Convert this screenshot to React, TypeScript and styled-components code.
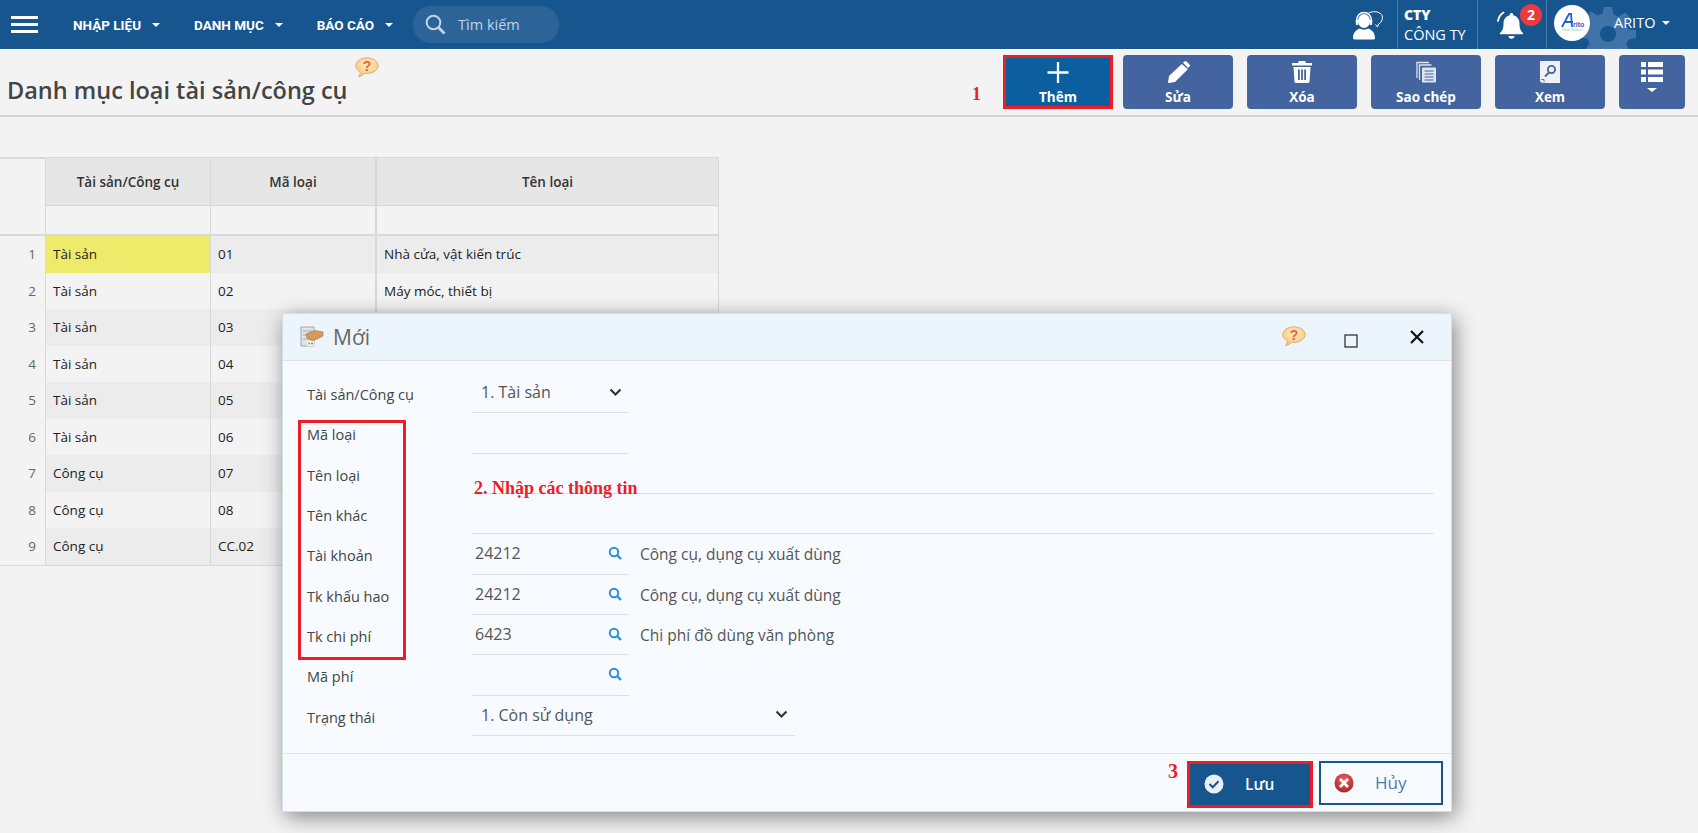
import React from "react";
import styled, { createGlobalStyle } from "styled-components";

const Global = createGlobalStyle`
  html, body { margin: 0; height: 100%; overflow: hidden; background: #f3f3f3; }
  body { font-family: "Open Sans", "Noto Sans", sans-serif; color: #333; }
  * { box-sizing: border-box; }
`;

const Page = styled.div`
  position: relative;
  width: 1698px;
  height: 833px;
  overflow: hidden;
`;

/* ---------- top bar ---------- */
const TopBar = styled.header`
  display: flex;
  align-items: center;
  height: 50px;
  background: #17558f;
  border-bottom: 1px solid #fff;
  color: #fff;
  overflow: hidden;
`;
const Burger = styled.div`
  width: 27px;
  height: 17px;
  margin: 0 0 0 11px;
  display: flex;
  flex-direction: column;
  justify-content: space-between;
  i { display: block; height: 3px; background: #fff; }
`;
const Menu = styled.nav`
  display: flex;
  align-items: center;
  margin-left: 35px;
  gap: 34px;
`;
const MenuItem = styled.span`
  display: flex;
  align-items: center;
  gap: 11px;
  font: 700 13.5px/20px Roboto, sans-serif;
  letter-spacing: 0;
  white-space: nowrap;
`;
const Caret = styled.span`
  display: inline-block;
  width: 0;
  height: 0;
  border-left: 4px solid transparent;
  border-right: 4px solid transparent;
  border-top: 4px solid #fff;
`;
const Search = styled.div`
  width: 146px;
  height: 37px;
  margin-left: 20px;
  margin-bottom: 1px;
  border-radius: 18px;
  background: #2b6498;
  color: #c3d3e3;
  display: flex;
  align-items: center;
  padding-left: 12px;
  gap: 12px;
  font-size: 14.5px;
`;
const RightBar = styled.div`
  margin-left: auto;
  height: 49px;
  display: flex;
  align-items: stretch;
`;
const Cell = styled.div<{ $w: number }>`
  width: ${(p) => p.$w}px;
  display: flex;
  align-items: center;
  border-left: 1px solid #4b7dac;
  position: relative;
`;
const SupportCell = styled.div`
  width: 44px;
  display: flex;
  align-items: center;
`;
const Company = styled(Cell)`
  flex-direction: column;
  align-items: flex-start;
  justify-content: center;
  padding-left: 6px;
`;
const CompanyCode = styled.b`
  font: 800 14px/19px "Open Sans", sans-serif;
`;
const CompanyName = styled.span`
  font-size: 14.5px;
  line-height: 21px;
  white-space: nowrap;
`;
const Badge = styled.span`
  position: absolute;
  left: 42px;
  top: 4px;
  width: 22px;
  height: 22px;
  border-radius: 50%;
  background: #e83a3f;
  color: #fff;
  font: 700 14px/22px "Open Sans", sans-serif;
  text-align: center;
`;
const Gear = styled.div`
  position: absolute;
  left: 33px;
  top: 6px;
  color: #3f72a6;
  line-height: 0;
`;
const Avatar = styled.div`
  position: absolute;
  left: 7px;
  top: 5px;
  width: 36px;
  height: 36px;
  border-radius: 50%;
  background: #fff;
  line-height: 0;
`;
const UserName = styled.span`
  position: absolute;
  left: 67px;
  top: 13px;
  font-size: 14.5px;
  line-height: 20px;
  display: flex;
  align-items: center;
  gap: 7px;
`;

/* ---------- title + toolbar ---------- */
const TitleBar = styled.div`
  display: flex;
  height: 67px;
  border-bottom: 2px solid #d4d4d4;
  padding-right: 13px;
`;
const Title = styled.h1`
  margin: 23px 0 0 7px;
  font: 600 23.5px/34px "Open Sans", sans-serif;
  color: #444;
  white-space: nowrap;
`;
const TitleHelp = styled.span`
  margin: 7px 0 0 7px;
  line-height: 0;
`;
const Toolbar = styled.div`
  margin-left: auto;
  padding-top: 5px;
  display: flex;
  align-items: flex-start;
  gap: 14px;
`;
const Step = styled.span<{ $size: number }>`
  font: 700 ${(p) => p.$size}px/20px "Liberation Serif", serif;
  color: #ee1c25;
`;
const StepOne = styled(Step)`
  margin: 29px 8px 0 0;
`;
const ToolButton = styled.div<{ $w?: number; $active?: boolean }>`
  width: ${(p) => p.$w ?? 110}px;
  height: 54px;
  border-radius: 4px;
  background: ${(p) => (p.$active ? "#0c5f9e" : "#43649e")};
  color: #fff;
  display: flex;
  flex-direction: column;
  align-items: center;
  padding-top: ${(p) => (p.$active ? 4 : 6)}px;
  ${(p) => p.$active && "border: 3px solid #ee1c25; border-radius: 0; margin-right: -4px;"}
  font: 700 13.5px/18px "Open Sans", sans-serif;
  white-space: nowrap;
  svg { display: block; }
`;
const ToolLabel = styled.span`
  margin-top: 5px;
`;

/* ---------- grid ---------- */
const Table = styled.div`
  margin-top: 40px;
  width: 719px;
  display: grid;
  grid-template-columns: 45px 165px 165px 1fr;
  grid-template-rows: 47px 30px repeat(9, 36.5px);
  border-top: 2px solid #d8d8d8;
  border-right: 1px solid #d8d8d8;
  border-bottom: 1px solid #d8d8d8;
  font-size: 13.5px;
  color: #222;
`;
const HeadCell = styled.div<{ $thick?: boolean }>`
  background: #e6e6e6;
  border-left: ${(p) => (p.$thick ? 2 : 1)}px solid #d8d8d8;
  border-bottom: 1px solid #d8d8d8;
  display: flex;
  align-items: center;
  justify-content: center;
  font-weight: 600;
  color: #333;
  margin-top: -1px;
`;
const Corner = styled.div`
  border-bottom: 1px solid transparent;
`;
const FilterCell = styled.div<{ $thick?: boolean }>`
  border-left: ${(p) => (p.$thick ? 2 : 1)}px solid #d8d8d8;
  border-bottom: 2px solid #d8d8d8;
`;
const NumCell = styled.div`
  display: flex;
  align-items: center;
  justify-content: flex-end;
  padding-right: 9px;
  color: #666;
  border-top: 0;
`;
const FilterNum = styled.div`
  border-bottom: 2px solid #d8d8d8;
`;
const DataCell = styled.div<{ $odd: boolean; $thick?: boolean; $sel?: boolean }>`
  background: ${(p) => (p.$sel ? "#eeeb6b" : p.$odd ? "#ececec" : "#f3f3f3")};
  border-left: ${(p) => (p.$thick ? 2 : 1)}px solid #d8d8d8;
  display: flex;
  align-items: center;
  padding-left: 7px;
  white-space: nowrap;
`;

/* ---------- dialog ---------- */
const Dialog = styled.section`
  position: absolute;
  left: 282px;
  top: 313px;
  width: 1170px;
  height: 499px;
  background: #f7fbff;
  border: 1px solid #d6dde3;
  box-shadow: 3px 5px 20px rgba(0, 0, 0, 0.45);
`;
const DialogHead = styled.div`
  height: 47px;
  background: #edf5fc;
  border-bottom: 1px solid #dfe3e7;
  display: flex;
  align-items: center;
  padding-left: 17px;
  position: relative;
`;
const DialogTitle = styled.span`
  margin-left: 9px;
  font-size: 21px;
  color: #666;
`;
const HeadControls = styled.div`
  margin-left: auto;
  display: flex;
  align-items: center;
  padding-right: 27px;
  line-height: 0;
`;
const Form = styled.div`
  padding: 12px 0 17px 24px;
`;
const Row = styled.div`
  display: flex;
  height: 40.33px;
`;
const Label = styled.label`
  width: 165px;
  flex: none;
  font-size: 14.5px;
  line-height: 20px;
  padding-top: 12px;
  color: #444;
  white-space: nowrap;
`;
const Field = styled.div<{ $w?: number; $grow?: boolean; $pad?: number }>`
  ${(p) => (p.$grow ? "flex: 1; margin-right: 17px;" : `width: ${p.$w}px;`)}
  border-bottom: 1px solid #dcdfe3;
  display: flex;
  align-items: center;
  justify-content: space-between;
  padding: 0 7px 1px ${(p) => p.$pad ?? 3}px;
  font-size: 16px;
  color: #555;
`;
const Description = styled.span`
  margin: 0 0 0 11px;
  font-size: 15.5px;
  line-height: 40px;
  color: #555;
  white-space: nowrap;
`;
const LabelBox = styled.div`
  position: absolute;
  left: 15px;
  top: 106px;
  width: 108px;
  height: 240px;
  border: 3px solid #ee1c25;
  pointer-events: none;
`;
const StepTwo = styled(Step)`
  position: absolute;
  left: 191px;
  top: 164px;
  white-space: nowrap;
`;
const StepThree = styled(Step)`
  position: absolute;
  left: 885px;
  top: 447px;
`;
const Footer = styled.div`
  border-top: 1px solid #dfe3e7;
  display: flex;
  justify-content: flex-end;
  align-items: flex-start;
  gap: 6px;
  padding: 7px 8px 0 0;
`;
const SaveButton = styled.div`
  width: 126px;
  height: 47px;
  background: #17558f;
  border: 3px solid #ee1c25;
  color: #fff;
  display: flex;
  align-items: center;
  padding-left: 14px;
  gap: 21px;
  font-size: 15.5px;
  font-weight: 600;
`;
const CancelButton = styled.div`
  width: 124px;
  height: 44px;
  border: 2px solid #17558f;
  color: #4a7cb0;
  display: flex;
  align-items: center;
  padding-left: 13px;
  gap: 21px;
  font-size: 17px;
`;

/* ---------- drawings ---------- */
const Help = ({ w = 24, id }: { w?: number; id: string }) => (
  <svg width={w} height={w * 0.88} viewBox="0 0 24 21">
    <defs>
      <radialGradient id={id} cx="0.5" cy="0.35" r="0.7">
        <stop offset="0" stopColor="#fff0c4" />
        <stop offset="1" stopColor="#f8c067" />
      </radialGradient>
    </defs>
    <path d="M12 .8C5.8.8.8 4.2.8 8.6c0 2.7 1.8 4.8 4.6 6.2-.1 1.8-.8 3.4-1.9 4.8 2.6-.6 4.9-2 6.4-3.4.7.1 1.400.1 2.100.1 6.200 0 11.200-3.400 11.200-7.700S18.200.8 12 .8z" fill={`url(#${id})`} stroke="#e5a68a" />
    <text x="12" y="14" textAnchor="middle" fontFamily="Liberation Sans, sans-serif" fontWeight="700" fontSize="14" fill="#e2614a">?</text>
  </svg>
);
const SearchGlass = () => (
  <svg width="21" height="21" viewBox="0 0 21 21" fill="none" stroke="#c3d3e3" strokeWidth="2">
    <circle cx="8.500" cy="8.500" r="6.800" />
    <path d="M13.500 13.500l6 6" strokeWidth="2.800" />
  </svg>
);
const Support = () => (
  <svg width="30" height="30" viewBox="0 0 30 30" fill="#fff">
    <path d="M15 3.500c4.500-3 11-2 13.500 1 2 3 .5 8-3 9.500l-1 3-2-2.500" fill="none" stroke="#fff" strokeWidth="1" />
    <ellipse cx="11" cy="11" rx="6" ry="7" />
    <path d="M3.500 11C3.500 5.500 7 2.500 11 2.500s7.500 3 7.500 8.500" fill="none" stroke="#fff" strokeWidth="1.600" />
    <rect x="2.800" y="9.500" width="2.600" height="5.500" rx="1" />
    <rect x="16.600" y="9.500" width="2.600" height="5.500" rx="1" />
    <path d="M0 28c0-5 3-8.500 7-9.500 2 1.500 6 1.500 8 0 4 1 7 4.500 7 9.500 0 1-1 1.500-2 1.500H2c-1 0-2-.5-2-1.500z" />
  </svg>
);
const Bell = () => (
  <svg width="28" height="28" viewBox="0 0 28 28" fill="#fff">
    <path d="M14.500 2c1 0 1.700.7 1.700 1.700v.6c4 .9 6.300 4.200 6.300 8.200 0 5.500 1.300 7.500 3.500 9.500.5.500.2 1.300-.5 1.300H3.500c-.7 0-1-.8-.5-1.300 2.200-2 3.500-4 3.500-9.500 0-4 2.300-7.300 6.300-8.200v-.6c0-1 .7-1.700 1.700-1.700z" />
    <path d="M11.500 25h6c0 1.500-1.300 2.700-3 2.700s-3-1.200-3-2.700z" />
    <path d="M6.500 1.500C3.500 3.500 1.500 6.500 1 10" fill="none" stroke="#fff" strokeWidth="1.800" strokeLinecap="round" />
  </svg>
);
const GearShape = () => (
  <svg width="56" height="56" viewBox="0 0 56 56" fill="currentColor">
    <path fillRule="evenodd" d="M24 1h8l1.500 7.500 5.200 2.200 6.400-4.300 5.600 5.600-4.300 6.400 2.200 5.200L56 24v8l-7.500 1.500-2.200 5.200 4.300 6.400-5.600 5.600-6.400-4.300-5.200 2.200L32 55h-8l-1.500-7.500-5.200-2.200-6.400 4.300-5.600-5.600 4.300-6.400-2.200-5.200L0 32v-8l7.500-1.500 2.200-5.200-4.300-6.400 5.600-5.600 6.400 4.300 5.200-2.200zM28 20a8 8 0 1 0 0 16 8 8 0 0 0 0-16z" />
  </svg>
);
const Logo = () => (
  <svg width="36" height="36" viewBox="0 0 36 36">
    <path d="M8 22L15 9h2l1 13M11 17h8" fill="none" stroke="#1f5fd0" strokeWidth="1.800" />
    <text x="19" y="22" fontFamily="Liberation Sans, sans-serif" fontWeight="700" fontSize="7" fill="#1f5fd0">rito</text>
    <text x="18" y="26" textAnchor="middle" fontFamily="Liberation Sans, sans-serif" fontSize="3" fill="#9bb">Smart Solution</text>
  </svg>
);
const PlusIcon = () => (
  <svg width="22" height="22" viewBox="0 0 22 22" stroke="#fff" strokeWidth="2.400">
    <path d="M11 0v22M0 11h22" />
  </svg>
);
const PencilIcon = () => (
  <svg width="23" height="22" viewBox="0 0 23 22" fill="#fff">
    <path d="M16 1.800l1.500-1.300c.6-.5 1.400-.5 2 0l3 3c.5.600.5 1.400 0 2L21 7z" />
    <path d="M14.800 3l6 5.200L8 21 1.500 22 1 21.500 2 15z" />
  </svg>
);
const TrashIcon = () => (
  <svg width="20" height="22" viewBox="0 0 20 22" fill="#fff">
    <path d="M7 0h6l1 2h6v2.500H0V2h6z" />
    <path fillRule="evenodd" d="M1.500 6h17l-1 14.500c0 .8-.7 1.500-1.500 1.500H4c-.8 0-1.500-.7-1.500-1.500zM6 8.500v10.500h1.800V8.500zm3.100 0v10.500h1.800V8.500zm3.100 0v10.500h1.800V8.500z" />
  </svg>
);
const CopyIcon = () => (
  <svg width="22" height="22" viewBox="0 0 22 22" fill="none" stroke="#dfe5ef" strokeWidth="1.300">
    <path d="M2 17V1.500h12" />
    <path d="M4.500 19V4h12" />
    <rect x="7" y="6.500" width="14" height="15" rx="1" fill="#dfe5ef" stroke="none" />
    <path d="M9.500 10h9M9.500 13h9M9.500 16h9M9.500 19h9" stroke="#43649e" strokeWidth="1.200" />
  </svg>
);
const ViewIcon = () => (
  <svg width="20" height="22" viewBox="0 0 20 22">
    <path d="M0 1c0-.6.4-1 1-1h18c.6 0 1 .4 1 1v21H3c-1.700 0-3-1-3-2.500z" fill="#eef1f6" />
    <circle cx="11.500" cy="8.500" r="3.600" fill="none" stroke="#43649e" strokeWidth="1.800" />
    <path d="M9 11.500l-4 4" stroke="#43649e" strokeWidth="2" />
    <path d="M1 18.500h3v3" fill="none" stroke="#43649e" strokeWidth=".8" />
  </svg>
);
const ListIcon = () => (
  <svg width="22" height="32" viewBox="0 0 22 32" fill="#fff">
    <path d="M0 1h5v5H0zM7 1h15v5H7zM0 8.500h5v5H0zM7 8.500h15v5H7zM0 16h5v5H0zM7 16h15v5H7z" />
    <path d="M6 27h10l-5 4z" />
  </svg>
);
const RecordIcon = () => (
  <svg width="24" height="22" viewBox="0 0 24 22">
    <rect x="1" y="1" width="13" height="19" fill="#dfe3e6" stroke="#8f979d" strokeWidth=".8" />
    <path d="M3 5h9M3 9h9M3 13h9" stroke="#a7afb5" strokeWidth="1.200" />
    <rect x="7" y="15" width="7" height="5" fill="#f5f5ef" />
    <path d="M6 8l9-3.500 8 1.500v4l-6 3-5 1.500-5-2.500z" fill="#d69a5c" stroke="#a56a35" strokeWidth=".6" />
    <circle cx="9" cy="17.500" r="1" fill="#6aaa55" />
    <circle cx="12" cy="17.500" r="1" fill="#d5564a" />
  </svg>
);
const Chevron = () => (
  <svg width="13" height="9" viewBox="0 0 13 9" fill="none" stroke="#333" strokeWidth="2.200">
    <path d="M1.500 1.500l5 5 5-5" />
  </svg>
);
const Lookup = () => (
  <svg width="14" height="14" viewBox="0 0 14 14" fill="none" stroke="#2f8fd5" strokeWidth="2">
    <circle cx="6" cy="6" r="4.200" />
    <path d="M9 9l4 4" strokeWidth="2.400" />
  </svg>
);
const CheckRound = () => (
  <svg width="20" height="20" viewBox="0 0 20 20">
    <circle cx="10" cy="10" r="9.500" fill="#e9eff5" />
    <path d="M5.500 10l3.200 3.200 5.800-6" fill="none" stroke="#17558f" strokeWidth="2" />
  </svg>
);
const CancelRound = () => (
  <svg width="20" height="20" viewBox="0 0 20 20">
    <defs>
      <radialGradient id="cr" cx="0.5" cy="0.3" r="0.8">
        <stop offset="0" stopColor="#e8615e" />
        <stop offset="1" stopColor="#a81c1c" />
      </radialGradient>
    </defs>
    <circle cx="10" cy="10" r="9.500" fill="url(#cr)" />
    <path d="M6 6l8 8M14 6l-8 8" stroke="#fff" strokeWidth="2.800" />
  </svg>
);
const MaxIcon = () => (
  <svg width="14" height="14" viewBox="0 0 14 14" fill="none" stroke="#333" strokeWidth="1.300">
    <rect x="1" y="1" width="12" height="12" />
  </svg>
);
const CloseIcon = () => (
  <svg width="14" height="14" viewBox="0 0 14 14" stroke="#111" strokeWidth="2.200">
    <path d="M1 1l12 12M13 1L1 13" />
  </svg>
);
const MaxWrap = styled.span`
  margin: 8px 0 0 38px;
`;
const CloseWrap = styled.span`
  margin: 0 0 0 52px;
`;

const rows = [
  ["Tài sản", "01", "Nhà cửa, vật kiến trúc"],
  ["Tài sản", "02", "Máy móc, thiết bị"],
  ["Tài sản", "03", ""],
  ["Tài sản", "04", ""],
  ["Tài sản", "05", ""],
  ["Tài sản", "06", ""],
  ["Công cụ", "07", ""],
  ["Công cụ", "08", ""],
  ["Công cụ", "CC.02", ""],
];

const tools = [
  { label: "Sửa", icon: <PencilIcon /> },
  { label: "Xóa", icon: <TrashIcon /> },
  { label: "Sao chép", icon: <CopyIcon /> },
  { label: "Xem", icon: <ViewIcon /> },
];

export default function App() {
  return (
    <Page>
      <Global />
      <TopBar>
        <Burger><i /><i /><i /></Burger>
        <Menu>
          <MenuItem>NHẬP LIỆU <Caret /></MenuItem>
          <MenuItem>DANH MỤC <Caret /></MenuItem>
          <MenuItem>BÁO CÁO <Caret /></MenuItem>
        </Menu>
        <Search><SearchGlass /> Tìm kiếm</Search>
        <RightBar>
          <SupportCell><Support /></SupportCell>
          <Company $w={80}>
            <CompanyCode>CTY</CompanyCode>
            <CompanyName>CÔNG TY</CompanyName>
          </Company>
          <Cell $w={69}>
            <span style={{ marginLeft: 19, lineHeight: 0 }}><Bell /></span>
            <Badge>2</Badge>
          </Cell>
          <Cell $w={152}>
            <Gear><GearShape /></Gear>
            <Avatar><Logo /></Avatar>
            <UserName>ARITO <Caret /></UserName>
          </Cell>
        </RightBar>
      </TopBar>

      <TitleBar>
        <Title>Danh mục loại tài sản/công cụ</Title>
        <TitleHelp><Help id="h1" /></TitleHelp>
        <Toolbar>
          <StepOne $size={18}>1</StepOne>
          <ToolButton $active>
            <PlusIcon />
            <ToolLabel>Thêm</ToolLabel>
          </ToolButton>
          {tools.map((t) => (
            <ToolButton key={t.label}>
              {t.icon}
              <ToolLabel>{t.label}</ToolLabel>
            </ToolButton>
          ))}
          <ToolButton $w={66}><ListIcon /></ToolButton>
        </Toolbar>
      </TitleBar>

      <Table>
        <Corner />
        <HeadCell>Tài sản/Công cụ</HeadCell>
        <HeadCell>Mã loại</HeadCell>
        <HeadCell $thick>Tên loại</HeadCell>
        <FilterNum />
        <FilterCell />
        <FilterCell />
        <FilterCell $thick />
        {rows.map((r, i) => (
          <React.Fragment key={i}>
            <NumCell>{i + 1}</NumCell>
            <DataCell $odd={i % 2 === 0} $sel={i === 0}>{r[0]}</DataCell>
            <DataCell $odd={i % 2 === 0}>{r[1]}</DataCell>
            <DataCell $odd={i % 2 === 0} $thick>{r[2]}</DataCell>
          </React.Fragment>
        ))}
      </Table>

      <Dialog>
        <DialogHead>
          <RecordIcon />
          <DialogTitle>Mới</DialogTitle>
          <HeadControls>
            <Help id="h2" />
            <MaxWrap><MaxIcon /></MaxWrap>
            <CloseWrap><CloseIcon /></CloseWrap>
          </HeadControls>
        </DialogHead>
        <Form>
          <Row>
            <Label>Tài sản/Công cụ</Label>
            <Field $w={157} $pad={9}>1. Tài sản <Chevron /></Field>
          </Row>
          <Row>
            <Label>Mã loại</Label>
            <Field $w={157} />
          </Row>
          <Row>
            <Label>Tên loại</Label>
            <Field $grow />
          </Row>
          <Row>
            <Label>Tên khác</Label>
            <Field $grow />
          </Row>
          <Row>
            <Label>Tài khoản</Label>
            <Field $w={157}>24212 <Lookup /></Field>
            <Description>Công cụ, dụng cụ xuất dùng</Description>
          </Row>
          <Row>
            <Label>Tk khấu hao</Label>
            <Field $w={157}>24212 <Lookup /></Field>
            <Description>Công cụ, dụng cụ xuất dùng</Description>
          </Row>
          <Row>
            <Label>Tk chi phí</Label>
            <Field $w={157}>6423 <Lookup /></Field>
            <Description>Chi phí đồ dùng văn phòng</Description>
          </Row>
          <Row>
            <Label>Mã phí</Label>
            <Field $w={157}><span /><Lookup /></Field>
          </Row>
          <Row>
            <Label>Trạng thái</Label>
            <Field $w={323} $pad={9}>1. Còn sử dụng <Chevron /></Field>
          </Row>
        </Form>
        <Footer>
          <SaveButton><CheckRound /> Lưu</SaveButton>
          <CancelButton><CancelRound /> Hủy</CancelButton>
        </Footer>
        <LabelBox />
        <StepTwo $size={18}>2. Nhập các thông tin</StepTwo>
        <StepThree $size={20}>3</StepThree>
      </Dialog>
    </Page>
  );
}
